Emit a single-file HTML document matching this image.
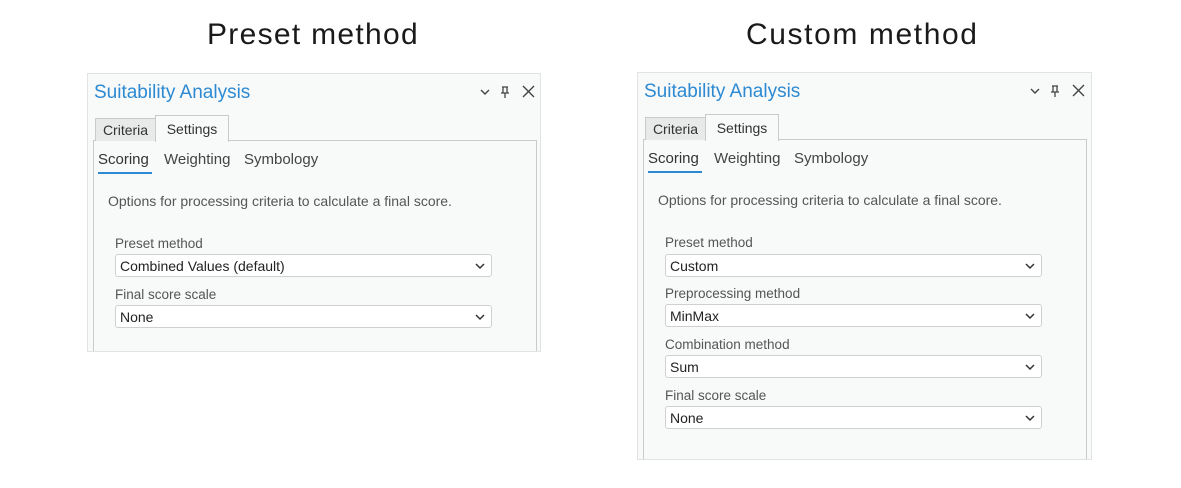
<!DOCTYPE html>
<html><head><style>
body{margin:0;width:1181px;height:488px;background:#fff;position:relative;overflow:hidden;font-family:"Liberation Sans",sans-serif;}
.a{position:absolute;white-space:nowrap;}
.h{font-size:30px;color:#1a1a1a;top:18px;letter-spacing:1.3px;}
.p{position:absolute;background:#f8f9f9;border:1px solid #e2e4e4;}
.t{font-size:19px;color:#2d8ad2;}
.in{position:absolute;border:1px solid #c9cbcb;border-bottom:none;background:#f8f9f9;}
.tab{position:absolute;font-size:14px;color:#333;border:1px solid #c9cbcb;border-bottom:none;text-align:center;}
.s{font-size:15px;color:#444;}
.l{font-size:13.5px;color:#555;}
.d{position:absolute;background:#fff;border:1px solid #cfd1d1;border-radius:3px;height:23px;font-size:14px;color:#222;line-height:23px;padding-left:4px;box-sizing:border-box;}
.d svg{position:absolute;right:6px;top:8px;}
</style></head><body>
<div class="a h" style="left:207px">Preset method</div>
<div class="a h" style="left:746px;letter-spacing:1.6px">Custom method</div>

<!-- panel 1 -->
<div class="p" style="left:87px;top:73px;width:452px;height:277px"></div>
<div class="a t" style="left:94px;top:82px">Suitability Analysis</div>
<svg class="a" style="left:479px;top:85px" width="60" height="14"><path d="M2 5l4 4 4-4" stroke="#444" stroke-width="1.4" fill="none"/><path d="M23 2h6M24 2v6M28 2v6M22 8h8M26 8v5" stroke="#444" stroke-width="1.3" fill="none"/><path d="M44 1l11 11M55 1L44 12" stroke="#444" stroke-width="1.4"/></svg>
<div class="in" style="left:93px;top:140px;width:442px;height:210px"></div>
<div class="tab" style="left:95px;top:118px;width:59px;height:22px;line-height:22px;background:#e8e9e9">Criteria</div>
<div class="tab" style="left:155px;top:115px;width:72px;height:26px;line-height:26px;background:#f8f9f9">Settings</div>
<div class="a s" style="left:98px;top:151px;color:#333">Scoring</div>
<div class="a" style="left:98px;top:172px;width:54px;height:2px;background:#2d8ad2"></div>
<div class="a s" style="left:164px;top:151px">Weighting</div>
<div class="a s" style="left:244px;top:151px">Symbology</div>
<div class="a l" style="left:108px;top:193px;font-size:14px">Options for processing criteria to calculate a final score.</div>
<div class="a l" style="left:115px;top:236px">Preset method</div>
<div class="d" style="left:115px;top:254px;width:377px">Combined Values (default)<svg width="10" height="7"><path d="M1 1l4 4 4-4" stroke="#333" stroke-width="1.5" fill="none"/></svg></div>
<div class="a l" style="left:115px;top:287px">Final score scale</div>
<div class="d" style="left:115px;top:305px;width:377px">None<svg width="10" height="7"><path d="M1 1l4 4 4-4" stroke="#333" stroke-width="1.5" fill="none"/></svg></div>

<!-- panel 2 -->
<div class="p" style="left:637px;top:72px;width:453px;height:386px"></div>
<div class="a t" style="left:644px;top:81px">Suitability Analysis</div>
<svg class="a" style="left:1029px;top:84px" width="60" height="14"><path d="M2 5l4 4 4-4" stroke="#444" stroke-width="1.4" fill="none"/><path d="M23 2h6M24 2v6M28 2v6M22 8h8M26 8v5" stroke="#444" stroke-width="1.3" fill="none"/><path d="M44 1l11 11M55 1L44 12" stroke="#444" stroke-width="1.4"/></svg>
<div class="in" style="left:643px;top:139px;width:442px;height:319px"></div>
<div class="tab" style="left:645px;top:117px;width:59px;height:22px;line-height:22px;background:#e8e9e9">Criteria</div>
<div class="tab" style="left:705px;top:114px;width:72px;height:26px;line-height:26px;background:#f8f9f9">Settings</div>
<div class="a s" style="left:648px;top:150px;color:#333">Scoring</div>
<div class="a" style="left:648px;top:171px;width:54px;height:2px;background:#2d8ad2"></div>
<div class="a s" style="left:714px;top:150px">Weighting</div>
<div class="a s" style="left:794px;top:150px">Symbology</div>
<div class="a l" style="left:658px;top:192px;font-size:14px">Options for processing criteria to calculate a final score.</div>
<div class="a l" style="left:665px;top:235px">Preset method</div>
<div class="d" style="left:665px;top:254px;width:377px">Custom<svg width="10" height="7"><path d="M1 1l4 4 4-4" stroke="#333" stroke-width="1.5" fill="none"/></svg></div>
<div class="a l" style="left:665px;top:286px">Preprocessing method</div>
<div class="d" style="left:665px;top:304px;width:377px">MinMax<svg width="10" height="7"><path d="M1 1l4 4 4-4" stroke="#333" stroke-width="1.5" fill="none"/></svg></div>
<div class="a l" style="left:665px;top:337px">Combination method</div>
<div class="d" style="left:665px;top:355px;width:377px">Sum<svg width="10" height="7"><path d="M1 1l4 4 4-4" stroke="#333" stroke-width="1.5" fill="none"/></svg></div>
<div class="a l" style="left:665px;top:388px">Final score scale</div>
<div class="d" style="left:665px;top:406px;width:377px">None<svg width="10" height="7"><path d="M1 1l4 4 4-4" stroke="#333" stroke-width="1.5" fill="none"/></svg></div>
</body></html>
